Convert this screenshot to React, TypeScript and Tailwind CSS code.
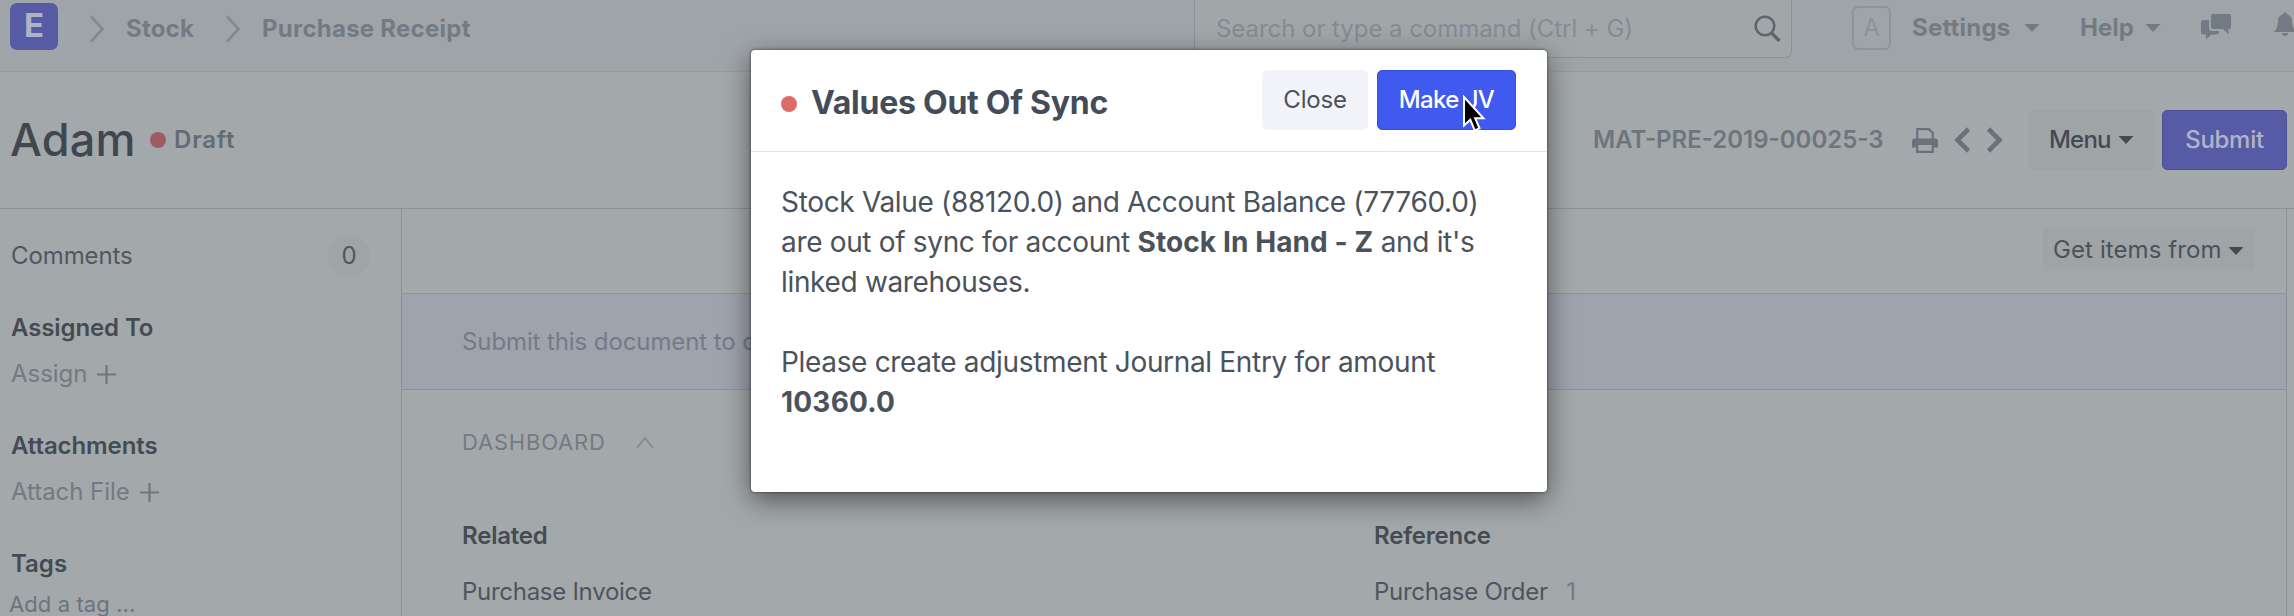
import type { ReactNode } from 'react';

function Chevron({ className }: { className: string }) {
  return (
    <svg className={`shrink-0 ${className}`} width="16" height="28" viewBox="0 0 16 28" fill="none" stroke="#81888f" strokeWidth="2.6">
      <path d="M2 1.5 L13.5 14 L2 26.5" />
    </svg>
  );
}

function Caret({ color, className = '' }: { color: string; className?: string }) {
  return (
    <svg className={`shrink-0 ${className}`} width="16" height="8" viewBox="0 0 16 8" fill={color}>
      <path d="M0.5 0 H15.5 L8 8 Z" />
    </svg>
  );
}

function Plus() {
  return (
    <svg width="19" height="19" viewBox="0 0 19 19" stroke="#70777d" strokeWidth="2.2">
      <path d="M9.5 0 V19 M0 9.5 H19" />
    </svg>
  );
}

function NavBar() {
  return (
    <header className="h-[72px] shrink-0 border-b border-[#969ca1] bg-[#9fa4a8] text-[24px] font-bold text-[#727b84]">
      <div className="flex h-[58px] items-center">
        <div className="-mt-[6px] ml-[10px] flex h-[47px] w-[48px] shrink-0 items-center justify-center rounded-[7px] bg-[#575ba6] text-[33px] font-bold text-[#b0b3c4]">
          E
        </div>
        <Chevron className="ml-[31px]" />
        <span className="ml-[21px] w-[99px] shrink-0 tracking-[0.2px]">Stock</span>
        <Chevron className="" />
        <span className="ml-[21px] w-[932px] shrink-0 whitespace-nowrap tracking-[0.25px]">Purchase Receipt</span>
        <div className="flex h-[58px] w-[598px] shrink-0 items-center rounded-b-[6px] border border-t-0 border-[#8b9197] bg-[#a1a6a8] pl-[21px] font-normal text-[#858c94]">
          <span className="w-[538px] tracking-[-0.05px]">Search or type a command (Ctrl + G)</span>
          <svg width="27" height="28" viewBox="0 0 27 28" fill="none" stroke="#5e666d" strokeWidth="2.6">
            <circle cx="11" cy="11" r="9.3" />
            <path d="M17.5 18 L25.5 26" strokeWidth="3.4" />
          </svg>
        </div>
        <div className="-mt-[3px] ml-[60px] flex h-[44px] w-[39px] shrink-0 items-center justify-center rounded-[6px] border-2 border-[#8d949a] font-normal text-[#8b9299]">
          A
        </div>
        <div className="-mt-[3px] ml-[21px] flex shrink-0 items-center">
          <span className="w-[112px] tracking-[0.2px]">Settings</span>
          <Caret color="#727b84" />
          <span className="ml-[40px] w-[65px]">Help</span>
          <Caret color="#727b84" />
          <svg className="-mt-[2px] ml-[40px] shrink-0" width="30" height="26" viewBox="0 0 30 26" fill="#727b84">
            <path d="M12 0 H28 Q30 0 30 2 V13 Q30 15 28 15 H27.5 V20.5 L22 15 H12 Q10 15 10 13 V2 Q10 0 12 0 Z" />
            <path d="M2 6 H8 V14 Q8 17 11 17 H18 V18.5 Q18 20.5 16 20.5 H10.5 L5 25.5 V20.5 H2 Q0 20.5 0 18.5 V8 Q0 6 2 6 Z" />
          </svg>
          <svg className="-mt-[8px] ml-[42px] shrink-0" width="24" height="24" viewBox="0 0 24 24" fill="#727b84">
            <path d="M12 0 Q13.5 0 13.5 2 Q19 3.5 19 9 Q19 17 23.5 20 H0.5 Q5 17 5 9 Q5 3.5 10.5 2 Q10.5 0 12 0 Z M9 21 H15 Q15 24 12 24 Q9 24 9 21 Z" />
          </svg>
        </div>
      </div>
    </header>
  );
}

function TitleBar() {
  return (
    <div className="flex h-[137px] shrink-0 items-center border-b border-[#8c9298] text-[24px]">
      <h1 className="ml-[10px] w-[140px] text-[45px] leading-[52px] font-medium tracking-[0.2px] text-[#40474f]">Adam</h1>
      <span className="size-[16px] rounded-full bg-[#9d5c61]" />
      <span className="ml-[8px] w-[1419px] font-semibold tracking-[0.8px] text-[#646c73]">Draft</span>
      <span className="w-[319px] font-semibold whitespace-nowrap tracking-[0px] text-[#6d757d]">MAT-PRE-2019-00025-3</span>
      <svg className="shrink-0" width="26" height="25" viewBox="0 0 26 25">
        <path d="M5.2 11 V1.2 H17 L20.8 5 V11" fill="none" stroke="#69717a" strokeWidth="2.2" />
        <path d="M3 10.5 H23 Q26 10.5 26 13.5 V19.5 H22 V17 H4 V19.5 H0 V13.5 Q0 10.5 3 10.5 Z" fill="#69717a" />
        <path d="M5.2 16.5 V23.8 H20.8 V16.5" fill="none" stroke="#69717a" strokeWidth="2.2" />
      </svg>
      <svg className="ml-[16px] shrink-0" width="49" height="26" viewBox="0 0 49 26" fill="none" stroke="#69717a" strokeWidth="4.6">
        <path d="M14.5 2 L3.5 13 L14.5 24 M34.5 2 L45.5 13 L34.5 24" />
      </svg>
      <div className="ml-[25px] flex h-[60px] w-[126px] shrink-0 items-center rounded-[5px] bg-[#9fa4a7] pl-[21px] font-medium text-[#434a52]">
        <span className="w-[69px] tracking-[-0.8px]">Menu</span>
        <Caret color="#434a52" />
      </div>
      <div className="ml-[8px] flex h-[60px] w-[125px] shrink-0 items-center justify-center rounded-[5px] border border-[#4f529a] bg-[#575ba6] font-medium tracking-[-0.3px] text-[#b1b4c8]">
        Submit
      </div>
    </div>
  );
}

function SideGroup({ title, action }: { title: string; action: string }) {
  return (
    <section className="mb-[26px]">
      <h2 className="font-semibold tracking-[-0.1px] text-[#444b53]">{title}</h2>
      <div className="flex items-center gap-[10px] text-[#727a82]">
        <span className="tracking-[-0.05px]">{action}</span>
        <Plus />
      </div>
    </section>
  );
}

function Sidebar() {
  return (
    <aside className="w-[402px] shrink-0 border-r border-[#8c9298] pt-[24px] pl-[11px] text-[24px] leading-[46px]">
      <div className="mb-[26px] flex h-[46px] items-center justify-between pr-[31px] text-[#50575f]">
        <span className="tracking-[-0.1px]">Comments</span>
        <span className="flex h-[40px] w-[42px] items-center justify-center rounded-full bg-[#9fa4a7]">0</span>
      </div>
      <SideGroup title="Assigned To" action="Assign" />
      <SideGroup title="Attachments" action="Attach File" />
      <h2 className="font-semibold text-[#444b53]">Tags</h2>
      <div className="mt-[6px] -ml-[2px] text-[22px] leading-[22px] tracking-[0.1px] text-[#6c747c]">Add a tag ...</div>
    </aside>
  );
}

function LinkColumn({ title, children }: { title: string; children: ReactNode }) {
  return (
    <div className="w-[912px] shrink-0 leading-[56px]">
      <h3 className="font-semibold tracking-[-0.2px] text-[#444b53]">{title}</h3>
      <div className="tracking-[-0.28px] text-[#4e555d]">{children}</div>
    </div>
  );
}

function FormBody() {
  return (
    <main className="w-[1885px] shrink-0 border-r border-[#8c9298] text-[24px]">
      <div className="flex h-[85px] justify-end border-b border-[#8c9298] pt-[19px] pr-[31px]">
        <div className="flex h-[43px] w-[212px] items-center rounded-[4px] bg-[#9fa4a7] pl-[10px] text-[#4b525a]">
          <span className="w-[175px] tracking-[0.1px] whitespace-nowrap">Get items from</span>
          <Caret color="#434a52" className="mt-[3px]" />
        </div>
      </div>
      <div className="flex h-[96px] items-center border-b border-[#8c9298] bg-[#9fa3ad] pl-[60px] tracking-[-0.1px] text-[#737b87]">
        Submit this document to confirm
      </div>
      <div className="pl-[60px]">
        <div className="mt-[24px] flex h-[56px] items-center text-[22px] tracking-[0.8px] text-[#737b82]">
          <span className="w-[174px]">DASHBOARD</span>
          <svg width="18" height="13" viewBox="0 0 18 13" fill="none" stroke="#868d93" strokeWidth="2">
            <path d="M1 12 L9 2 L17 12" />
          </svg>
        </div>
        <div className="mt-[38px] flex">
          <LinkColumn title="Related">Purchase Invoice</LinkColumn>
          <LinkColumn title="Reference">
            Purchase Order <span className="ml-[12px] text-[#727a86]">1</span>
          </LinkColumn>
        </div>
      </div>
    </main>
  );
}

function Dialog() {
  return (
    <div className="absolute top-[50px] left-[751px] h-[442px] w-[796px] rounded-[4px] bg-white text-[#4a525c] shadow-[0_8px_28px_rgba(0,0,0,0.5),0_0_3px_rgba(0,0,0,0.6)]">
      <div className="flex h-[102px] items-center border-b border-[#e3e5e8] pl-[30px]">
        <span className="mt-[6px] size-[16px] rounded-full bg-[#df6b68]" />
        <h2 className="mt-[5px] ml-[14px] w-[451px] text-[32px] font-bold tracking-[-0.25px] text-[#434c57]">Values Out Of Sync</h2>
        <div className="-mt-[2px] flex h-[60px] w-[106px] items-center justify-center rounded-[5px] bg-[#f3f4f9] text-[24px] tracking-[-0.2px]">
          Close
        </div>
        <div className="relative -mt-[2px] ml-[9px] flex h-[60px] w-[139px] items-center justify-center rounded-[5px] border border-[#3a51dd] bg-[#4059ee] text-[24px] font-medium tracking-[-0.6px] text-white">
          Make JV
          <svg className="absolute top-[24px] left-[84px]" width="26" height="38" viewBox="0 0 26 38">
            <path d="M2 2 V30.5 L8.3 24.8 L12.7 35.3 L17.5 33.3 L13.2 23.2 H21.5 Z" fill="#000" stroke="#fff" strokeWidth="2" />
          </svg>
        </div>
      </div>
      <div className="pt-[30px] pl-[30px] text-[28px] leading-[40px] tracking-[-0.33px] whitespace-nowrap">
        <p>Stock Value (88120.0) and Account Balance (77760.0)</p>
        <p>
          are out of sync for account <b className="font-bold tracking-[0.1px]">Stock In Hand - Z</b> and it's
        </p>
        <p>linked warehouses.</p>
        <p className="mt-[40px]">Please create adjustment Journal Entry for amount</p>
        <p className="font-bold tracking-[0.2px]">10360.0</p>
      </div>
    </div>
  );
}

export default function App() {
  return (
    <div className="relative flex h-[616px] w-[2294px] flex-col overflow-hidden bg-[#a3a8aa] font-[Inter,sans-serif]">
      <NavBar />
      <TitleBar />
      <div className="flex grow">
        <Sidebar />
        <FormBody />
      </div>
      <Dialog />
    </div>
  );
}
